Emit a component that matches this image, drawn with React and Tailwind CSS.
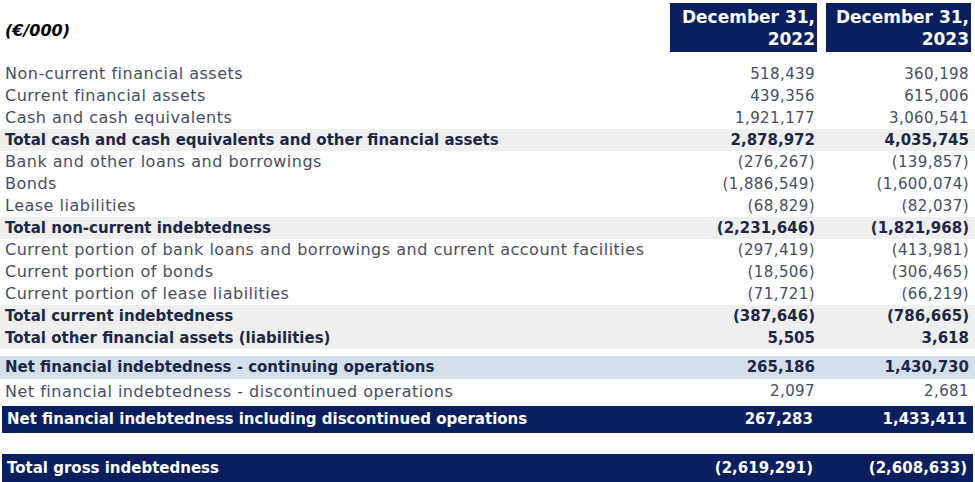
import React from "react";

const rows = [
  { label: "Non-current financial assets", a: "518,439", b: "360,198" },
  { label: "Current financial assets", a: "439,356", b: "615,006" },
  { label: "Cash and cash equivalents", a: "1,921,177", b: "3,060,541" },
  { label: "Total cash and cash equivalents and other financial assets", a: "2,878,972", b: "4,035,745", kind: "total" },
  { label: "Bank and other loans and borrowings", a: "(276,267)", b: "(139,857)" },
  { label: "Bonds", a: "(1,886,549)", b: "(1,600,074)" },
  { label: "Lease liabilities", a: "(68,829)", b: "(82,037)" },
  { label: "Total non-current indebtedness", a: "(2,231,646)", b: "(1,821,968)", kind: "total" },
  { label: "Current portion of bank loans and borrowings and current account facilities", a: "(297,419)", b: "(413,981)" },
  { label: "Current portion of bonds", a: "(18,506)", b: "(306,465)" },
  { label: "Current portion of lease liabilities", a: "(71,721)", b: "(66,219)" },
  { label: "Total current indebtedness", a: "(387,646)", b: "(786,665)", kind: "total" },
  { label: "Total other financial assets (liabilities)", a: "5,505", b: "3,618", kind: "total" },
];

const Row = ({ label, a, b, kind, className = "" }) => {
  const styles = {
    plain: "text-[#464d64] font-normal",
    total: "bg-[#efefef] text-[#1d2748] font-bold",
    blue: "bg-[#d3dfea] text-[#1d2748] font-bold",
    navy: "bg-[#0b1f5e] text-white font-bold",
  };
  const plain = !kind;
  return (
    <div className={`flex items-center h-[22px] ${styles[kind || "plain"]} ${className}`}>
      <div className={`flex-1 pl-[5px] whitespace-nowrap ${plain ? "text-[16px] tracking-[0.5px]" : ""}`}>{label}</div>
      <div className={`w-[147px] text-right pr-[2px] ${plain ? "tracking-[0.4px]" : ""}`}>{a}</div>
      <div className={`w-[145px] ml-[9px] text-right pr-[2px] ${plain ? "tracking-[0.4px]" : ""}`}>{b}</div>
      <div className="w-[4px]" />
    </div>
  );
};

export default function App() {
  return (
    <div
      className="w-[975px] h-[482px] bg-white overflow-hidden text-[15px] leading-none"
      style={{ fontFamily: '"DejaVu Sans", sans-serif' }}
    >
      {/* header */}
      <div className="flex items-end h-[63px] pt-[3px] pb-[11px]">
        <div className="flex-1 self-center pl-[5px] pt-[6px] font-bold italic text-[16px] text-black">(€/000)</div>
        <div className="w-[147px] h-[49px] bg-[#0b1f5e] text-white font-bold text-[17px] leading-[22px] text-right pr-[2px] pt-[3px]">
          December 31,<br />2022
        </div>
        <div className="w-[145px] ml-[9px] h-[49px] bg-[#0b1f5e] text-white font-bold text-[17px] leading-[22px] text-right pr-[2px] pt-[3px]">
          December 31,<br />2023
        </div>
        <div className="w-[4px]" />
      </div>

      {/* body */}
      <div className="flex flex-col">
        {rows.map((r) => (
          <Row key={r.label} {...r} />
        ))}
      </div>

      <div className="mt-[7px] flex flex-col">
        <Row label="Net financial indebtedness - continuing operations" a="265,186" b="1,430,730" kind="blue" className="h-[23px]" />
        <Row label="Net financial indebtedness - discontinued operations" className="h-[25px]" a="2,097" b="2,681" />
        <div className="px-[2px]">
          <Row label="Net financial indebtedness including discontinued operations" a="267,283" b="1,433,411" kind="navy" className="h-[27px] mt-[2px]" />
        </div>
        <div className="px-[2px] mt-[21px]">
          <Row label="Total gross indebtedness" a="(2,619,291)" b="(2,608,633)" kind="navy" className="h-[28px]" />
        </div>
      </div>
    </div>
  );
}
